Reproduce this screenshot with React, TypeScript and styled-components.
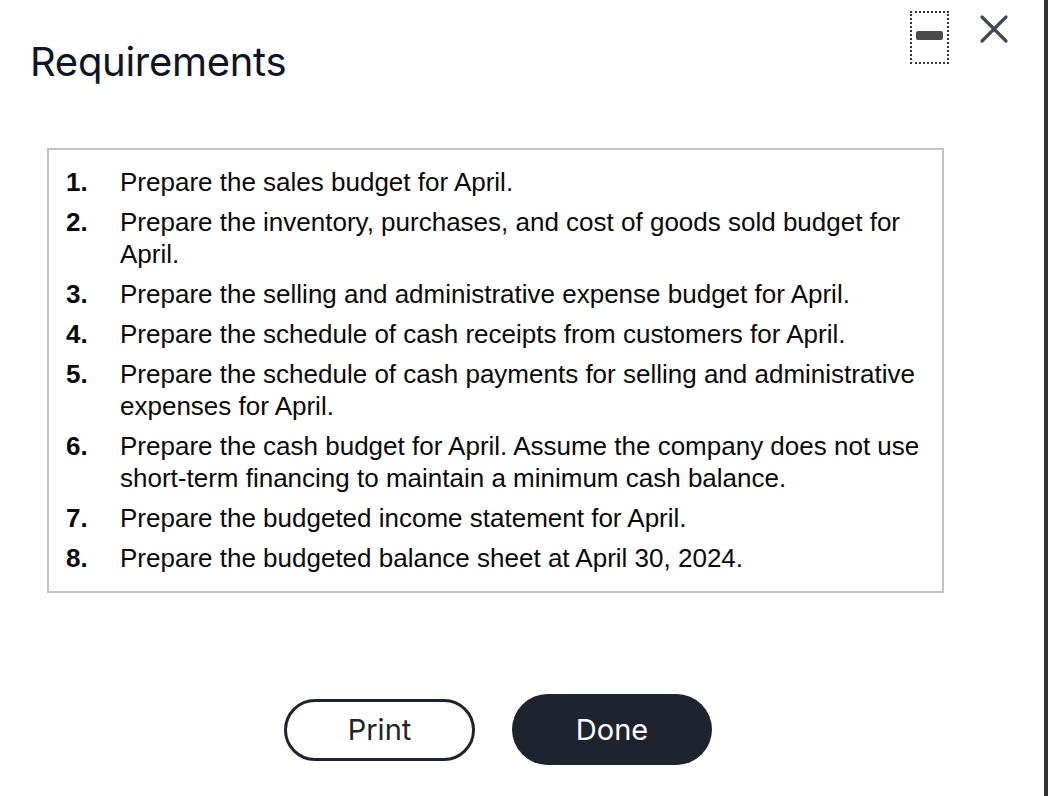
import React from 'react';
import styled, { createGlobalStyle } from 'styled-components';

const GlobalStyle = createGlobalStyle`
  html, body {
    margin: 0;
    padding: 0;
    background: #ffffff;
  }
  body {
    font-family: 'Liberation Sans', Arial, sans-serif;
  }
`;

const Frame = styled.div`
  display: flex;
  width: 1048px;
  height: 796px;
  overflow: hidden;
`;

const Panel = styled.div`
  flex: 1;
  display: flex;
  flex-direction: column;
  background: #ffffff;
`;

const EdgeBar = styled.div`
  width: 4px;
  background: #333333;
`;

const Header = styled.header`
  display: flex;
  justify-content: space-between;
  align-items: flex-start;
  padding: 11px 35px 0 30px;
  height: 148px;
  box-sizing: border-box;
`;

const Title = styled.h1`
  margin: 26px 0 0 0;
  font-family: 'Inter', 'Liberation Sans', sans-serif;
  font-size: 40px;
  font-weight: 400;
  letter-spacing: -0.3px;
  color: #0d1526;
`;

const Controls = styled.div`
  display: flex;
  align-items: flex-start;
  gap: 30px;
`;

const Minimize = styled.button`
  width: 39px;
  height: 53px;
  padding: 0;
  border: 2px dotted #333333;
  background: transparent;
  box-sizing: border-box;
  display: flex;
  align-items: flex-start;
  justify-content: center;
  padding-top: 18px;
  cursor: pointer;
  & > span {
    display: block;
    width: 27px;
    height: 9px;
    border-radius: 2px;
    background: #4a4a4a;
  }
`;

const Close = styled.button`
  margin-top: 3px;
  width: 30px;
  height: 30px;
  padding: 0;
  border: none;
  background: transparent;
  cursor: pointer;
`;

const Body = styled.div`
  padding: 0 0 0 47px;
  width: 897px;
`;

const Box = styled.ol`
  list-style: none;
  margin: 0;
  padding: 16px 10px 17px 17px;
  border: 2px solid #c2c2c2;
  display: flex;
  flex-direction: column;
  gap: 8px;
`;

const Item = styled.li`
  display: flex;
  font-size: 26px;
  line-height: 32px;
  color: #0a0a0a;
`;

const Num = styled.span`
  flex: 0 0 54px;
  font-weight: 700;
`;

const Text = styled.span`
  flex: 1;
`;

const Actions = styled.div`
  display: flex;
  justify-content: center;
  align-items: center;
  gap: 37px;
  margin: 101px 0 0 5px;
`;

const Pill = styled.button<{ $dark?: boolean }>`
  box-sizing: border-box;
  width: ${(p) => (p.$dark ? '200px' : '191px')};
  height: ${(p) => (p.$dark ? '71px' : '62px')};
  border-radius: 36px;
  border: ${(p) => (p.$dark ? 'none' : '3px solid #1e2330')};
  background: ${(p) => (p.$dark ? '#1e2330' : '#ffffff')};
  color: ${(p) => (p.$dark ? '#ffffff' : '#1e2330')};
  font-family: 'Inter', 'Liberation Sans', sans-serif;
  font-size: 29px;
  font-weight: 400;
  cursor: pointer;
`;

const requirements = [
  'Prepare the sales budget for April.',
  'Prepare the inventory, purchases, and cost of goods sold budget for April.',
  'Prepare the selling and administrative expense budget for April.',
  'Prepare the schedule of cash receipts from customers for April.',
  'Prepare the schedule of cash payments for selling and administrative expenses for April.',
  'Prepare the cash budget for April. Assume the company does not use short-term financing to maintain a minimum cash balance.',
  'Prepare the budgeted income statement for April.',
  'Prepare the budgeted balance sheet at April 30, 2024.',
];

export default function App() {
  return (
    <Frame>
      <GlobalStyle />
      <Panel>
        <Header>
          <Title>Requirements</Title>
          <Controls>
            <Minimize aria-label="Minimize">
              <span />
            </Minimize>
            <Close aria-label="Close">
              <svg width="30" height="30" viewBox="0 0 30 30">
                <path
                  d="M3 3 L27 27 M27 3 L3 27"
                  stroke="#3f4856"
                  strokeWidth="3.2"
                  strokeLinecap="round"
                />
              </svg>
            </Close>
          </Controls>
        </Header>
        <Body>
          <Box>
            {requirements.map((r, i) => (
              <Item key={i}>
                <Num>{i + 1}.</Num>
                <Text>{r}</Text>
              </Item>
            ))}
          </Box>
          <Actions>
            <Pill>Print</Pill>
            <Pill $dark>Done</Pill>
          </Actions>
        </Body>
      </Panel>
      <EdgeBar />
    </Frame>
  );
}
